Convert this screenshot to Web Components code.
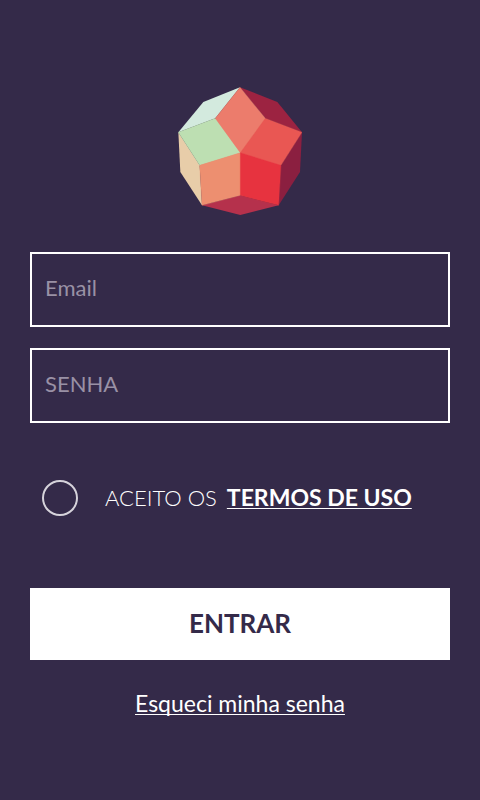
<!DOCTYPE html>
<html lang="pt-BR">
<head>
<meta charset="utf-8">
<meta name="viewport" content="width=device-width, initial-scale=1">
<title>Entrar</title>
<style>
html { background: #342a49; }
body { margin: 0; font-family: Lato, "Open Sans", sans-serif; font-size: 23px; line-height: 28px; color: #fff; }
</style>
</head>
<body>
<login-page>
  <gem-logo slot="logo"></gem-logo>
  <text-field name="email" type="email" label="Email"></text-field>
  <text-field name="senha" type="password" label="SENHA"></text-field>
  <terms-check>ACEITO OS<text-link slot="link" href="#termos" strong>TERMOS DE USO</text-link></terms-check>
  <submit-button>ENTRAR</submit-button>
  <text-link slot="footer" href="#senha">Esqueci minha senha</text-link>
</login-page>
<script>
class Base extends HTMLElement {
  constructor() {
    super();
    this.attachShadow({ mode: "open" });
  }
  connectedCallback() {
    const t = document.createElement("template");
    t.innerHTML = this.render();
    this.shadowRoot.replaceChildren(t.content.cloneNode(true));
  }
}

customElements.define("login-page", class extends Base {
  render() {
    return `<style>
      :host { display: block; }
      main { display: flex; flex-direction: column; padding: 87px 30px 30px; }
      header { display: flex; justify-content: center; margin-bottom: 37px; }
      form { display: flex; flex-direction: column; gap: 21px; }
      footer { display: flex; justify-content: center; margin-top: 29px; }
    </style>
    <main>
      <header><slot name="logo"></slot></header>
      <form><slot></slot></form>
      <footer><slot name="footer"></slot></footer>
    </main>`;
  }
});

customElements.define("gem-logo", class extends Base {
  render() {
    return `<style>
      :host { display: block; }
      svg { display: block; width: 124px; height: 128px; }
    </style>
    <svg viewBox="24 21 372 384" role="img" aria-label="Logo">
      <path fill="#e08070" d="M210 26 282 116 392 158 330 256 324 372 211 346 98 372 91 256 29 158 138 116Z"/>
      <path fill="#d3eade" d="M210 22 100 66 25 157 136 115Z"/>
      <path fill="#9c2341" d="M210 22 322 66 396 157 286 115Z"/>
      <path fill="#e8cda9" d="M25 157 31 276 96 376 89 256Z"/>
      <path fill="#8b1f40" d="M396 157 390 276 326 376 333 256Z"/>
      <path fill="#b5314c" d="M96 376 211 346 326 376 211 405Z"/>
      <g stroke-width="1" stroke-linejoin="round">
        <path fill="#bddfb2" stroke="#bddfb2" d="M25 157 136 115 211 218 89 256Z"/>
        <path fill="#ec7c6c" stroke="#ec7c6c" d="M210 22 286 115 211 218 136 115Z"/>
        <path fill="#e95753" stroke="#e95753" d="M286 115 396 157 333 256 211 218Z"/>
        <path fill="#ed8f70" stroke="#ed8f70" d="M211 218V346L96 376 89 256Z"/>
        <path fill="#e7333f" stroke="#e7333f" d="M211 218 333 256 326 376 211 346Z"/>
      </g>
    </svg>`;
  }
});

customElements.define("text-field", class extends Base {
  render() {
    const label = this.getAttribute("label");
    return `<style>
      :host { display: block; }
      input {
        display: block; box-sizing: border-box; width: 100%; height: 75px; margin: 0;
        padding: 0 13px 4px; border: 2px solid #fff; border-radius: 0;
        background: transparent; color: #fff; font: inherit; font-size: 22px; outline-offset: 2px;
      }
      input::placeholder { color: #9991a5; opacity: 1; }
    </style>
    <input type="${this.getAttribute("type")}" name="${this.getAttribute("name")}" placeholder="${label}" aria-label="${label}">`;
  }
});

customElements.define("terms-check", class extends Base {
  render() {
    return `<style>
      :host { display: flex; align-items: center; margin: 36px 12px 51px; }
      input {
        appearance: none; flex: none; box-sizing: border-box; width: 36px; height: 36px; margin: 0;
        border: 2px solid #d6d3db; border-radius: 50%; cursor: pointer;
      }
      input:checked { background: radial-gradient(#fff 50%, transparent 54%); }
      div { display: flex; align-items: baseline; gap: 10px; padding: 0 0 2px 27px; }
      label { font-size: 22px; font-weight: 300; cursor: pointer; }
    </style>
    <input id="terms" type="checkbox"><div><label for="terms"><slot></slot></label><slot name="link"></slot></div>`;
  }
});

customElements.define("submit-button", class extends Base {
  render() {
    return `<style>
      :host { display: block; }
      button {
        display: block; width: 100%; height: 72px; margin: 0; padding: 0 0 2px; border: 0;
        background: #fff; color: #342a49; font: inherit; font-size: 26px; font-weight: 700; cursor: pointer;
      }
    </style>
    <button type="button"><slot></slot></button>`;
  }
});

customElements.define("text-link", class extends Base {
  render() {
    return `<style>
      :host { display: block; }
      :host([strong]) { font-weight: 700; }
      a { color: inherit; text-decoration: underline 1px; text-underline-offset: 2px; text-decoration-skip-ink: none; }
    </style>
    <a href="${this.getAttribute("href")}"><slot></slot></a>`;
  }
});
</script>
</body>
</html>
